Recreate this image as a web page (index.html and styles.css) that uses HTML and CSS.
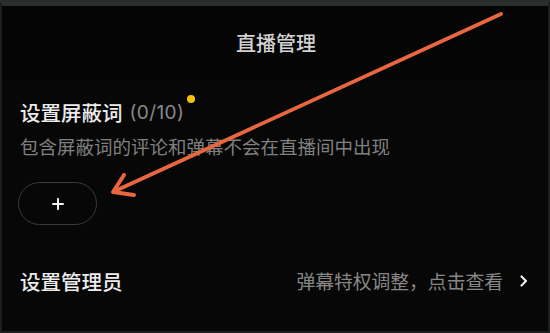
FILE: index.html
```html
<!DOCTYPE html>
<html lang="zh-CN">
<head>
<meta charset="utf-8">
<title>直播管理</title>
<link rel="stylesheet" href="styles.css">
</head>
<body>
<div class="frame">
  <header class="header">
    <h1 class="title">直播管理</h1>
  </header>
  <main class="content">
    <section class="block">
      <div class="heading">
        <span class="heading-text">设置屏蔽词</span>
        <span class="count">(0/10)</span>
        <span class="dot"></span>
      </div>
      <p class="desc">包含屏蔽词的评论和弹幕不会在直播间中出现</p>
      <button class="add-btn" type="button" aria-label="添加">
        <svg class="plus" width="12" height="12" viewBox="0 0 12 12">
          <path d="M6 1v10M1 6h10" stroke="#f2f2f2" stroke-width="2" stroke-linecap="round"/>
        </svg>
      </button>
    </section>
    <section class="row">
      <span class="row-title">设置管理员</span>
      <span class="row-right">
        <span class="row-hint">弹幕特权调整，点击查看</span>
        <svg class="chevron" width="10" height="14" viewBox="0 0 10 14">
          <path d="M2.5 2.5L7 7l-4.5 4.5" fill="none" stroke="#eeeeee" stroke-width="2.2" stroke-linecap="round" stroke-linejoin="round"/>
        </svg>
      </span>
    </section>
  </main>
  <svg class="annotation" width="550" height="333" viewBox="0 0 550 333">
    <line x1="501" y1="14" x2="115" y2="191" stroke="#e8673e" stroke-width="3.8" stroke-linecap="round"/>
    <polyline points="124,175 113,192 134,195" fill="none" stroke="#e8673e" stroke-width="4" stroke-linecap="round" stroke-linejoin="round"/>
  </svg>
</div>
</body>
</html>
```

FILE: styles.css
```css
* {
  box-sizing: border-box;
}

html, body {
  margin: 0;
  padding: 0;
  background: #070707;
}

body {
  font-family: "Noto Sans CJK SC", "Noto Sans", sans-serif;
}

.frame {
  position: relative;
  width: 550px;
  height: 333px;
  overflow: hidden;
  background: #070707;
  border-top: 6px solid #2b2e2e;
  border-left: 2px solid #1c1d1d;
  border-right: 2px solid #1c1d1d;
  border-bottom: 2px solid #1c1d1d;
}

.header {
  height: 74px;
  display: flex;
  align-items: center;
  justify-content: center;
  background: #050505;
}

.title {
  margin: 0;
  font-size: 20px;
  font-weight: 500;
  line-height: 28px;
  color: #d2d2d2;
  padding-left: 2px;
}

.content {
  padding: 18px 19px 0 18px;
}

.heading {
  display: flex;
  align-items: center;
  height: 28px;
}

.heading-text {
  font-size: 20.5px;
  line-height: 28px;
  color: #ececec;
  font-weight: 500;
}

.count {
  margin-left: 7px;
  font-family: "Inter", "Noto Sans", sans-serif;
  font-size: 19px;
  letter-spacing: 0.4px;
  color: #8a8a8a;
}

.dot {
  align-self: flex-start;
  margin-top: -3px;
  margin-left: 3px;
  width: 8px;
  height: 8px;
  border-radius: 50%;
  background: #f4c40a;
}

.desc {
  margin: 7px 0 0;
  font-size: 18.5px;
  line-height: 26px;
  color: #808080;
}

.add-btn {
  display: flex;
  align-items: center;
  justify-content: center;
  margin: 23px 0 0 -2px;
  width: 79px;
  height: 43px;
  border: 1.5px solid #3a3a3a;
  border-radius: 22px;
  background: transparent;
  padding: 0;
}

.row {
  display: flex;
  align-items: center;
  justify-content: space-between;
  margin-top: 42px;
  height: 28px;
}

.row-title {
  font-size: 20.5px;
  line-height: 28px;
  color: #ececec;
  font-weight: 500;
}

.row-right {
  display: flex;
  align-items: center;
  gap: 16px;
}

.row-hint {
  font-size: 18.8px;
  line-height: 28px;
  color: #878787;
}

.chevron {
  display: block;
}

.annotation {
  position: absolute;
  left: -2px;
  top: -6px;
  pointer-events: none;
}
```
